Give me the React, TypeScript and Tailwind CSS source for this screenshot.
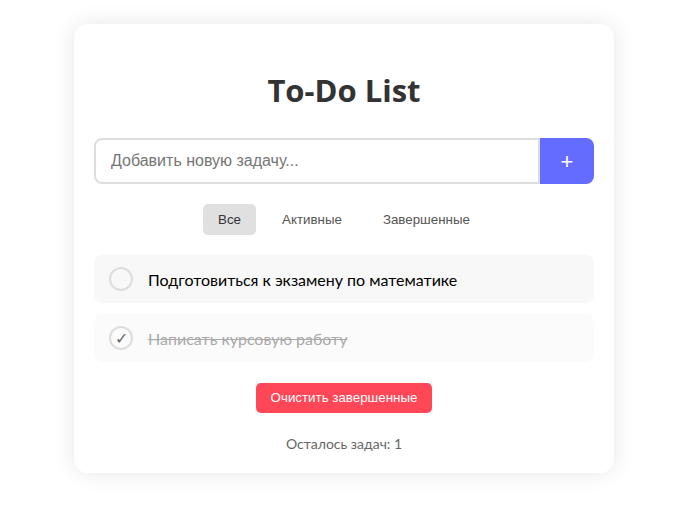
import { useState } from 'react';

type Task = { id: number; text: string; done: boolean };

const initialTasks: Task[] = [
  { id: 1, text: 'Подготовиться к экзамену по математике', done: false },
  { id: 2, text: 'Написать курсовую работу', done: true },
];

const filters = [
  { key: 'all', label: 'Все' },
  { key: 'active', label: 'Активные' },
  { key: 'done', label: 'Завершенные' },
];

export default function App() {
  const [tasks] = useState<Task[]>(initialTasks);
  const [filter, setFilter] = useState('all');

  const left = tasks.filter((t) => !t.done).length;

  return (
    <main className="min-h-screen bg-white pt-[24px] pl-[4px] font-['Lato','Open_Sans',sans-serif]">
      <div className="mx-auto w-[540px] rounded-[14px] bg-white px-5 pt-[46px] pb-[19px] shadow-[0_0_22px_rgba(0,0,0,0.1)]">
        <h1 className="mb-[28px] text-center font-['Open_Sans',sans-serif] text-[31px] leading-[40px] font-bold text-[#333]">
          To-Do List
        </h1>

        {/* Ввод */}
        <div className="flex h-[46px]">
          <input
            type="text"
            placeholder="Добавить новую задачу..."
            className="min-w-0 flex-1 rounded-l-lg border-2 border-[#ddd] px-[15px] font-['Liberation_Sans',Arial,sans-serif] text-[16px] text-[#333] outline-none placeholder:text-[#757575]"
          />
          <button className="w-[54px] rounded-r-lg bg-[#646cff] font-['Liberation_Sans',Arial,sans-serif] text-[22px] text-white">
            +
          </button>
        </div>

        {/* Фильтры */}
        <div className="mt-5 flex justify-center gap-[11px]">
          {filters.map((f) => (
            <button
              key={f.key}
              onClick={() => setFilter(f.key)}
              className={`h-[31px] rounded-[5px] px-[15px] font-['Liberation_Sans',Arial,sans-serif] text-[13.33px] ${
                filter === f.key ? 'bg-[#e0e0e0] text-[#333]' : 'bg-transparent text-[#555]'
              }`}
            >
              {f.label}
            </button>
          ))}
        </div>

        {/* Список */}
        <ul className="mt-5 flex flex-col gap-[11px]">
          {tasks.map((t) => (
            <li
              key={t.id}
              className={`flex h-[48px] items-center gap-[15px] rounded-lg px-[15px] ${
                t.done ? 'bg-[#fbfbfb]' : 'bg-[#f8f8f8]'
              }`}
            >
              <span
                className={`flex h-[24px] w-[24px] shrink-0 items-center justify-center rounded-full border-2 border-[#ddd] font-['Noto_Sans',sans-serif] text-[16px] leading-none ${
                  t.done ? 'text-[#666]' : ''
                }`}
              >
                {t.done ? '✓' : ''}
              </span>
              <span
                className={`pt-[2px] text-[16px] ${t.done ? 'text-[#aaa] line-through' : 'text-black'}`}
              >
                {t.text}
              </span>
            </li>
          ))}
        </ul>

        <div className="mt-[21px] flex justify-center">
          <button className="h-[30px] rounded-[5px] bg-[#ff4757] px-[15px] font-['Liberation_Sans',Arial,sans-serif] text-[13.33px] text-white">
            Очистить завершенные
          </button>
        </div>

        <p className="mt-[21px] text-center text-[14px] leading-[20px] text-[#666]">
          Осталось задач: {left}
        </p>
      </div>
    </main>
  );
}
